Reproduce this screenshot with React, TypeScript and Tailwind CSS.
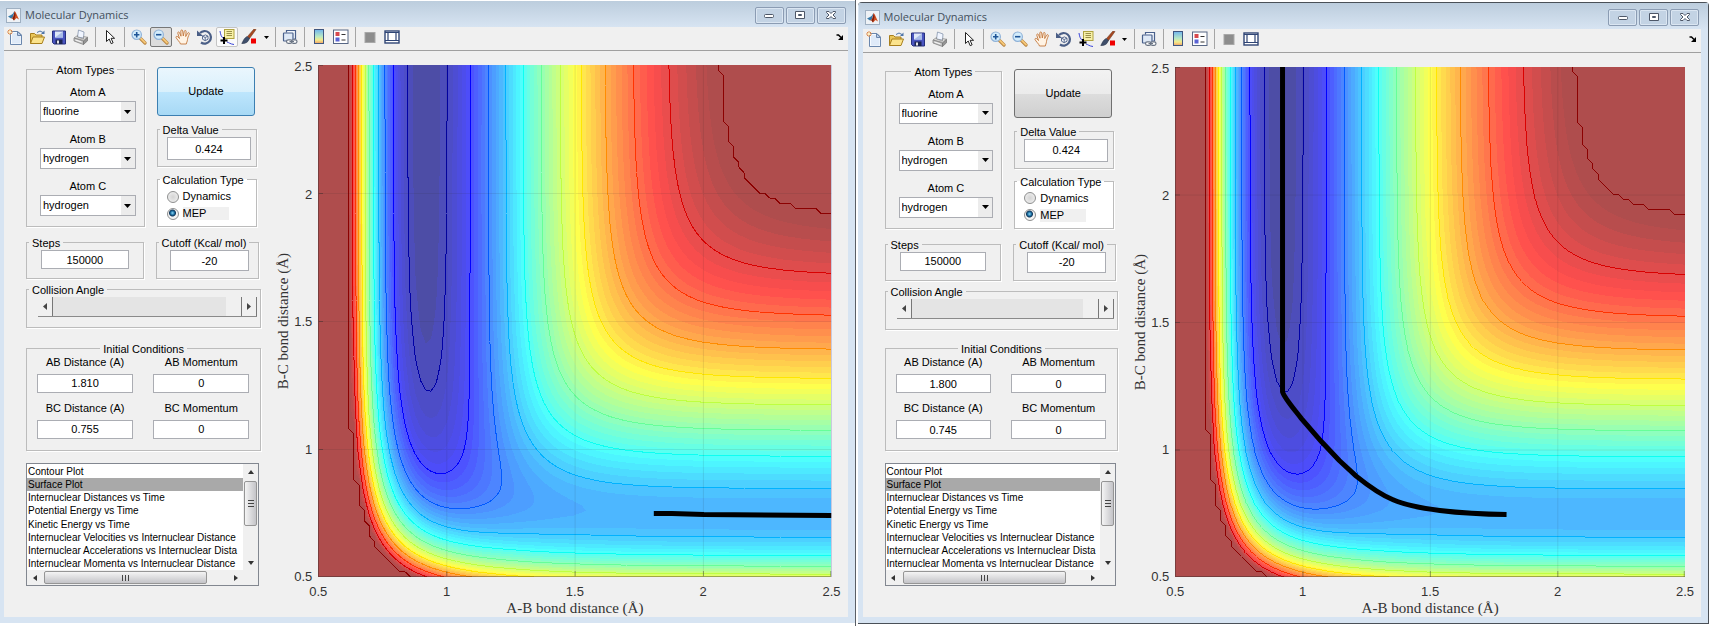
import { useId, type ReactNode } from "react";

/* ---------- LEPS potential energy surface for collinear F + H2 ---------- */

const SIZE = 512;
const CELLS = 100;
const STEP = SIZE / CELLS;
const R_MIN = 0.5;
const R_SPAN = 2;
const V_MIN = -141.5;
const V_CUT = -22.2;
const LINE_STEP = 10.44;
const BANDS_PER_LINE = 5;
const SATO = 0.188;

type Bond = { d: number; beta: number; re: number };
const HF: Bond = { d: 141.2, beta: 2.2187, re: 0.919 };
const HH: Bond = { d: 109.5, beta: 1.942, re: 0.742 };

function terms(bond: Bond, r: number): [number, number] {
  const e = Math.exp(-bond.beta * (r - bond.re));
  const singlet = bond.d * (e * e - 2 * e);
  const triplet = (bond.d / 2) * ((1 - SATO) / (1 + SATO)) * (e * e + 2 * e);
  return [(singlet + triplet) / 2, (singlet - triplet) / 2];
}

function energy(ab: number, bc: number): number {
  const [q1, j1] = terms(HF, ab);
  const [q2, j2] = terms(HH, bc);
  const [q3, j3] = terms(HF, ab + bc);
  return q1 + q2 + q3 - Math.sqrt(0.5 * ((j1 - j2) ** 2 + (j2 - j3) ** 2 + (j3 - j1) ** 2));
}

// Row 0 is the top of the plot (largest B-C distance).
const field: number[][] = Array.from({ length: CELLS + 1 }, (_, row) =>
  Array.from({ length: CELLS + 1 }, (_, col) => {
    const ab = R_MIN + (R_SPAN * col) / CELLS;
    const bc = R_MIN + (R_SPAN * (CELLS - row)) / CELLS;
    return Math.min(V_CUT, energy(ab, bc));
  }),
);

const clamp = (v: number) => Math.max(0, Math.min(1, v));

function jet(level: number, alpha: number): string {
  const t = clamp((level - V_MIN) / (V_CUT - V_MIN));
  const rgb = [3, 2, 1].map((c) => clamp(1.5 - Math.abs(4 * t - c)));
  if (t > 0.9) rgb[0] = Math.max(0.55, rgb[0]);
  return `rgb(${rgb.map((c) => Math.round(255 * (c * alpha + 1 - alpha))).join(",")})`;
}

type Point = [number, number];
const fmt = (p: Point) => `${p[0].toFixed(1)} ${p[1].toFixed(1)}`;

function cellPolygon(row: number, col: number, level: number) {
  const corners: [number, number, number][] = [
    [col, row, field[row][col]],
    [col + 1, row, field[row][col + 1]],
    [col + 1, row + 1, field[row + 1][col + 1]],
    [col, row + 1, field[row + 1][col]],
  ];
  const polygon: Point[] = [];
  const crossings: Point[] = [];
  let inside = 0;
  corners.forEach(([x, y, v], i) => {
    const [nx, ny, nv] = corners[(i + 1) % 4];
    if (v >= level) {
      inside += 1;
      polygon.push([x * STEP, y * STEP]);
    }
    if (v >= level !== nv >= level) {
      const t = (level - v) / (nv - v);
      const p: Point = [(x + (nx - x) * t) * STEP, (y + (ny - y) * t) * STEP];
      polygon.push(p);
      crossings.push(p);
    }
  });
  return { polygon, crossings, inside };
}

function fillPath(level: number): string {
  const parts: string[] = [];
  for (let row = 0; row < CELLS; row++) {
    let start = -1;
    for (let col = 0; col <= CELLS; col++) {
      const cell = col < CELLS ? cellPolygon(row, col, level) : null;
      if (cell && cell.inside === 4) {
        if (start < 0) start = col;
        continue;
      }
      if (start >= 0) {
        parts.push(`M${fmt([start * STEP, row * STEP])}H${(col * STEP).toFixed(1)}V${((row + 1) * STEP).toFixed(1)}H${(start * STEP).toFixed(1)}Z`);
        start = -1;
      }
      if (cell && cell.inside > 0) parts.push(`M${cell.polygon.map(fmt).join("L")}Z`);
    }
  }
  return parts.join("");
}

function linePath(level: number): string {
  const parts: string[] = [];
  for (let row = 0; row < CELLS; row++) {
    for (let col = 0; col < CELLS; col++) {
      const { crossings } = cellPolygon(row, col, level);
      for (let i = 0; i + 1 < crossings.length; i += 2) {
        parts.push(`M${fmt(crossings[i])}L${fmt(crossings[i + 1])}`);
      }
    }
  }
  return parts.join("");
}

const bandStep = LINE_STEP / BANDS_PER_LINE;
const bands = Array.from({ length: 57 }, (_, i) => {
  const level = V_CUT - bandStep * (56 - i);
  return { d: fillPath(level), color: jet(level + bandStep / 2, 0.7) };
});
const lines = Array.from({ length: 12 }, (_, i) => {
  const level = V_CUT - LINE_STEP * i;
  return { d: linePath(level), color: jet(level, 1) };
});

const TICKS = ["0.5", "1", "1.5", "2", "2.5"];

function ContourPlot({ path }: { path: string }) {
  return (
    <svg
      viewBox="0 0 512 512"
      preserveAspectRatio="none"
      className="block min-h-0 min-w-0 flex-1"
      role="img"
      aria-label="Potential energy contour plot"
    >
      <rect width="512" height="512" fill={jet(V_MIN, 0.7)} />
      <g shapeRendering="crispEdges">
        {bands.map((b, i) => (
          <path key={i} d={b.d} fill={b.color} />
        ))}
        {lines.map((l, i) => (
          <path key={i} d={l.d} fill="none" stroke={l.color} strokeWidth="1" />
        ))}
      </g>
      <path d="M128.500 0V512M256.500 0V512M384.500 0V512M0 128.500H512M0 256.500H512M0 384.500H512" stroke="#262626" strokeOpacity="0.1" fill="none" />
      <path
        d="M0.500 0V511.500H512M128.500 512V506M256.500 512V506M384.500 512V506M511.500 512V506M0 .5H5M0 128.500H5M0 256.500H5M0 384.500H5"
        stroke="#262626"
        strokeOpacity="0.4"
        fill="none"
      />
      <path d={path} stroke="#000" strokeWidth="5" fill="none" strokeLinejoin="round" />
    </svg>
  );
}

function PlotArea({ path }: { path: string }) {
  return (
    <div className="flex min-w-0 flex-1 pt-[14px] pr-[16px] text-[13px] text-[#333]">
      <div className="mb-[40px] flex w-[14px] items-center justify-center font-['Liberation_Serif',serif] text-[15px] leading-[16px]">
        <span className="rotate-180 whitespace-nowrap [writing-mode:vertical-rl]">B-C bond distance (Å)</span>
      </div>
      <div className="mb-[40px] flex w-[28px] flex-col-reverse justify-between pr-[6px] pt-[2px]">
        {TICKS.map((t) => (
          <span key={t} className="flex h-0 items-center justify-end">
            {t}
          </span>
        ))}
      </div>
      <div className="flex min-w-0 flex-1 flex-col">
        <ContourPlot path={path} />
        <div className="flex h-[24px] items-center justify-between pt-[5px]">
          {TICKS.map((t) => (
            <span key={t} className="flex w-0 justify-center">
              {t}
            </span>
          ))}
        </div>
        <div className="h-[16px] text-center font-['Liberation_Serif',serif] text-[15px] leading-[14px]">A-B bond distance (Å)</div>
      </div>
    </div>
  );
}

/* ------------------------------- Toolbar ------------------------------- */

function Icon({ children }: { children: ReactNode }) {
  return (
    <svg viewBox="0 0 16 16" className="h-4 w-4 shrink-0" aria-hidden="true">
      {children}
    </svg>
  );
}

const NewIcon = () => (
  <Icon>
    <path d="M3.500 2.500h7.500l3.500 3.500v9.500h-11z" fill="#f7fbff" stroke="#6b87ad" />
    <path d="M5 4h5v3h3.500v7.500H5z" fill="#dfeaf8" />
    <path d="M10.500 2.500V6.500h4z" fill="#b9cde8" stroke="#6b87ad" />
    <path d="M3 0v6M0 3h6M1 1l4 4M5 1l-4 4" stroke="#e08a4a" />
    <circle cx="3" cy="3" r="1.200" fill="#fff2c0" />
  </Icon>
);
const OpenIcon = () => (
  <Icon>
    <path d="M1.500 14.500v-10h4l1.500 1.500h6v3" fill="#e9c65a" stroke="#a87f1c" />
    <path d="M1.500 14.500l2.500-6.500h11.500l-2.500 6.500z" fill="#fbe38c" stroke="#a87f1c" />
    <path d="M8 3.500q3-3 6 0" fill="none" stroke="#4f75a8" />
    <path d="M15.500 1.500v3.500h-3.500z" fill="#4f75a8" />
  </Icon>
);
const SaveIcon = () => (
  <Icon>
    <path d="M1.500 2h13v13H3l-1.500-1.500z" fill="#4a55c0" stroke="#26307e" />
    <rect x="4" y="2.500" width="8" height="6" fill="#dfe8f8" />
    <path d="M4 8.500L12 2.500v6z" fill="#a9bce8" />
    <rect x="4.500" y="10.500" width="7" height="4.500" fill="#1c2552" />
    <rect x="6" y="11.500" width="2" height="3" fill="#e8e8e8" />
  </Icon>
);
const PrintIcon = () => (
  <Icon>
    <path d="M4.500 8L5.500 1l5.500 2-.5 6z" fill="#f0f5ff" stroke="#8594ac" strokeWidth=".8" />
    <path d="M1 9l3.500-2.500v1.500l6 2V7.500l4 .8-3.500 3.200z" fill="#dcdcdc" stroke="#888" strokeWidth=".7" />
    <path d="M1 9l9.500 3v3.500L1 12z" fill="#c2c2c2" stroke="#808080" strokeWidth=".8" />
    <path d="M10.500 12l4-3.700v3.500l-4 3.700z" fill="#949494" stroke="#777" strokeWidth=".8" />
    <path d="M2.500 11l6 2" stroke="#fafafa" />
  </Icon>
);
const ArrowIcon = () => (
  <Icon>
    <path d="M4.500 1.500v11l2.700-2.500 2 4.700 1.900-.9-2-4.500h3.500z" fill="#fff" stroke="#222" />
  </Icon>
);
const ZoomIcon = ({ plus }: { plus?: boolean }) => (
  <Icon>
    <path d="M9.500 9.500l4.500 4.500" stroke="#b88442" strokeWidth="3.200" strokeLinecap="round" />
    <path d="M9.500 9.200l4.500 4.500" stroke="#f6c877" strokeWidth="1.900" strokeLinecap="round" />
    <circle cx="5.700" cy="5.700" r="4.700" fill="#d3ecfb" stroke="#8fb2d8" strokeWidth="1.200" />
    <path d={plus ? "M3 5.700h5.400M5.700 3v5.400" : "M3 5.700h5.400"} stroke="#1f5597" strokeWidth="1.600" />
  </Icon>
);
const HandIcon = () => (
  <Icon>
    <path
      d="M5.500 15c-.5-2-4-5-4.500-6.500-.3-1.200 1.200-1.500 2-.6L4.500 9.500 2.800 4.300c-.4-1.400 1.200-1.900 1.700-.6L6 7.200 5.800 2c0-1.400 1.800-1.400 1.900 0L8.300 7l1-4.700c.3-1.300 2-1 1.800.4L10.700 7.500l1.900-3.300c.7-1.200 2.200-.4 1.700.8-1 2.500-1.600 3.500-1.800 5.500-.1 2-1 3-1.200 4.500z"
      fill="#fff3e4"
      stroke="#c2763a"
      strokeWidth=".9"
    />
  </Icon>
);
const RotateIcon = () => (
  <Icon>
    <path d="M3 4A6.300 6.300 0 1 1 4 13.500" fill="none" stroke="#4a5e86" strokeWidth="2.200" />
    <path d="M0 1.500v5.500h6z" fill="#4a5e86" />
    <path d="M5.500 7.200l3-1.300 2.500 1.300v3L8.200 11.700 5.500 10.200zM5.500 7.200l2.700 1.300L11 7.200M8.200 8.500v3" fill="#f4f6fa" stroke="#4a5e86" strokeWidth=".9" />
  </Icon>
);
const CursorIcon = () => (
  <Icon>
    <path d="M1 2C1.500 5 2 8 5 10M8 13c2 .5 3 2 7 2.500" fill="none" stroke="#3a45d8" />
    <rect x="5.500" y=".5" width="9.500" height="9" fill="#f7f0a8" stroke="#b0a440" />
    <path d="M7.500 2.500h5.500M7.500 4.500h5.500M7.500 6.500h5.500" stroke="#9a9048" />
    <path d="M5 8v7M1.500 11.500h7" stroke="#000" strokeWidth="2" />
  </Icon>
);
const BrushIcon = () => (
  <Icon>
    <path d="M15 0.500L13 0 6.500 7.500l2 2z" fill="#a9471f" stroke="#6e3a22" strokeWidth=".6" />
    <path d="M6 7.500l2.500 2-1.700 3c-1.300 1.500-4 2.200-6 2C2 12.500 3 9 6 7.500z" fill="#3f4f6b" stroke="#29344a" strokeWidth=".6" />
    <rect x="10" y="9.500" width="5" height="5" fill="#f00000" />
  </Icon>
);
const LinkIcon = () => (
  <Icon>
    <path d="M4.500 3.500V1.500h9v8.500h-2" fill="#f4f8fd" stroke="#4a618c" strokeWidth="1.200" />
    <rect x="1.500" y="4" width="9.500" height="8" rx=".5" fill="#dfe9f6" stroke="#4a618c" strokeWidth="1.200" />
    <rect x="4.500" y="10.800" width="5.500" height="3.600" rx="1.800" fill="#fff" stroke="#6a7484" strokeWidth="1.200" />
    <rect x="9.500" y="10.800" width="5.500" height="3.600" rx="1.800" fill="#fff" stroke="#6a7484" strokeWidth="1.200" />
    <path d="M7.500 12.600h4.500" stroke="#6a7484" strokeWidth="1.200" />
  </Icon>
);
const ColorbarIcon = () => {
  const id = useId();
  return (
    <Icon>
      <linearGradient id={id} x1="0" y1="0" x2="0" y2="1">
        <stop offset="0" stopColor="#6fb4ee" />
        <stop offset=".5" stopColor="#b8e8c4" />
        <stop offset=".75" stopColor="#f4eb8a" />
        <stop offset="1" stopColor="#f0a06a" />
      </linearGradient>
      <rect x="3.500" y=".5" width="9" height="14" fill={`url(#${id})`} stroke="#3f5680" />
    </Icon>
  );
};
const LegendIcon = () => (
  <Icon>
    <rect x=".5" y="1" width="14.500" height="13.500" fill="#fff" stroke="#566684" />
    <rect x="2.500" y="3" width="4" height="4" fill="#d8484c" />
    <rect x="2.500" y="8.500" width="4" height="4" fill="#5a63d4" />
    <path d="M8.500 5.500h4M8.500 11h4" stroke="#333" />
  </Icon>
);
const HideIcon = () => (
  <Icon>
    <rect x="3" y="3.500" width="10" height="10" fill="#8d8d8d" stroke="#a8a8a8" />
  </Icon>
);
const DockIcon = () => (
  <Icon>
    <rect x="1" y="2" width="14" height="12" fill="#fff" stroke="#2f4575" strokeWidth="1.400" />
    <path d="M1 3.500h14M4 4v7M12 4v7M1 11.500h14" stroke="#2f4575" strokeWidth="1.200" fill="none" />
  </Icon>
);

function Tool({ label, state, children }: { label: string; state?: "pressed" | "hover"; children: ReactNode }) {
  const look =
    state === "pressed"
      ? "border-[#777] bg-[#dcdcdc]"
      : state === "hover"
        ? "border-[#c4c4c4] bg-[#fafafa]"
        : "border-transparent";
  return (
    <button type="button" aria-label={label} className={`flex h-5 w-[22px] items-center justify-center rounded-xs border ${look}`}>
      {children}
    </button>
  );
}

const Divider = () => (
  <span className="flex w-[7px] justify-center">
    <span className="h-5 w-px bg-[#a5a5a5]" />
  </span>
);

function Toolbar({ active }: { active: boolean }) {
  return (
    <div className="flex h-6 items-center border-b border-[#a0a0a0] bg-[#f0f0f0] pb-[3px]">
      <Tool label="New Figure"><NewIcon /></Tool>
      <Tool label="Open File"><OpenIcon /></Tool>
      <Tool label="Save Figure"><SaveIcon /></Tool>
      <Tool label="Print Figure"><PrintIcon /></Tool>
      <Divider />
      <Tool label="Edit Plot"><ArrowIcon /></Tool>
      <Divider />
      <Tool label="Zoom In"><ZoomIcon plus /></Tool>
      <Tool label="Zoom Out" state={active ? "pressed" : undefined}><ZoomIcon /></Tool>
      <Tool label="Pan"><HandIcon /></Tool>
      <Tool label="Rotate 3D"><RotateIcon /></Tool>
      <Tool label="Data Cursor" state={active ? "hover" : undefined}><CursorIcon /></Tool>
      <Tool label="Brush"><BrushIcon /></Tool>
      <button type="button" aria-label="Brush colours" className="flex h-5 w-3 items-center justify-center">
        <svg viewBox="0 0 5 3" className="h-[3px] w-[5px]"><path d="M0 0h5L2.500 3z" /></svg>
      </button>
      <Divider />
      <Tool label="Link Plot"><LinkIcon /></Tool>
      <Divider />
      <Tool label="Insert Colorbar"><ColorbarIcon /></Tool>
      <Tool label="Insert Legend"><LegendIcon /></Tool>
      <Divider />
      <Tool label="Hide Plot Tools"><HideIcon /></Tool>
      <Tool label="Show Plot Tools"><DockIcon /></Tool>
      <button type="button" aria-label="Dock" className="mr-1 ml-auto flex h-5 w-2 items-center">
        <svg viewBox="0 0 7 6" className="h-[6px] w-[7px]">
          <path d="M.5 1h2L5 3.500" stroke="#000" strokeWidth="1.500" fill="none" />
          <path d="M7 1v5H2z" />
        </svg>
      </button>
    </div>
  );
}

/* ------------------------------- Controls ------------------------------- */

type GroupProps = { title: string; center?: boolean; white?: boolean; className?: string; inner?: string; children: ReactNode };

function Group({ title, center, white, className, inner, children }: GroupProps) {
  return (
    <fieldset className={`min-w-0 border border-[#bcbcbc] shadow-[1px_1px_0_#fff] ${white ? "bg-white" : ""} ${className ?? ""}`}>
      <legend className={`px-[3px] pt-[2px] leading-[13px] whitespace-nowrap ${center ? "mx-auto" : "ml-[2px]"}`}>{title}</legend>
      <div className={inner}>{children}</div>
    </fieldset>
  );
}

function TextBox({ label, value, className }: { label: string; value: string; className?: string }) {
  return (
    <input
      type="text"
      aria-label={label}
      defaultValue={value}
      className={`block w-full min-w-0 border border-[#abadb3] bg-white text-center outline-none ${className ?? ""}`}
    />
  );
}

function LabelledBox({ label, value }: { label: string; value: string }) {
  const id = useId();
  return (
    <div className="min-w-0 flex-1">
      <label htmlFor={id} className="block text-center leading-[14px] whitespace-nowrap">{label}</label>
      <input id={id} type="text" defaultValue={value} className="mt-[5px] block h-[19px] w-full min-w-0 border border-[#abadb3] bg-white text-center outline-none" />
    </div>
  );
}

function AtomSelect({ label, value }: { label: string; value: string }) {
  const id = useId();
  return (
    <div>
      <label htmlFor={id} className="block text-center leading-[14px]">{label}</label>
      <div className="relative mt-[2px]">
        <select id={id} defaultValue={value} className="block h-[21px] w-full appearance-none border border-[#abadb3] bg-white pl-[2px] outline-none">
          <option>fluorine</option>
          <option>hydrogen</option>
        </select>
        <span className="pointer-events-none absolute top-px right-px bottom-px flex w-[14px] items-center justify-center bg-[#ececec]">
          <svg viewBox="0 0 7 4" className="h-1 w-[7px]"><path d="M0 0h7L3.500 4z" /></svg>
        </span>
      </div>
    </div>
  );
}

function Radio({ name, label, checked }: { name: string; label: string; checked?: boolean }) {
  return (
    <label className="flex h-[17px] items-center gap-[4px]">
      <input
        type="radio"
        name={name}
        defaultChecked={checked}
        className="h-3 w-3 appearance-none rounded-full border border-[#8e8f8f] bg-[radial-gradient(circle,#d4d4d4,#f4f4f4)] checked:bg-[radial-gradient(circle_at_45%_40%,#8fd8f8_0,#1b6ea0_2px,#10365a_3px,#f4f4f4_4px)]"
      />
      <span className={`h-[13px] w-[46px] leading-[13px] ${checked ? "bg-[#f0f0f0]" : ""}`}>{label}</span>
    </label>
  );
}

function StepButton({ label, flip }: { label: string; flip?: boolean }) {
  return (
    <button type="button" aria-label={label} className="flex h-[19px] w-[15px] items-center justify-center border-r border-[#777] bg-[#f0f0f0]">
      <svg viewBox="0 0 4 7" className={`h-[7px] w-1 ${flip ? "rotate-180" : ""}`}><path d="M4 0v7L0 3.500z" fill="#444" /></svg>
    </button>
  );
}

function CollisionAngle() {
  return (
    <Group title="Collision Angle" className="h-[46px]" inner="pr-[3px] pl-[11px]">
      <div className="flex border-b border-[#8a8a8a]">
        <StepButton label="Decrease angle" />
        <input
          type="range"
          aria-label="Collision Angle"
          defaultValue={180}
          max={180}
          className="h-[19px] min-w-0 flex-1 appearance-none bg-[#e4e4e4] [&::-webkit-slider-thumb]:h-[19px] [&::-webkit-slider-thumb]:w-4 [&::-webkit-slider-thumb]:appearance-none [&::-webkit-slider-thumb]:border-r [&::-webkit-slider-thumb]:border-[#777] [&::-webkit-slider-thumb]:bg-[#f0f0f0]"
        />
        <StepButton label="Increase angle" flip />
      </div>
    </Group>
  );
}

const PLOTS = [
  "Contour Plot",
  "Surface Plot",
  "Internuclear Distances vs Time",
  "Potential Energy vs Time",
  "Kinetic Energy vs Time",
  "Internuclear Velocities vs Internuclear Distance",
  "Internuclear Accelerations vs Internuclear Dista",
  "Internuclear Momenta vs Internuclear Distance",
];

function Arrow({ className, label }: { className: string; label: string }) {
  return (
    <button type="button" aria-label={label} className="flex h-[15px] w-[15px] shrink-0 items-center justify-center">
      <svg viewBox="0 0 6 4" className={`h-1 w-[6px] ${className}`}><path d="M0 4h6L3 0z" fill="#333" /></svg>
    </button>
  );
}

function PlotList() {
  return (
    <div className="flex h-[123px] flex-col border border-[#828790] bg-[#f0f0f0]">
      <div className="flex h-[106px] min-w-0">
        <ul role="listbox" aria-label="Plot type" className="flex min-w-0 flex-1 flex-col overflow-hidden bg-white pt-px text-[10px]">
          {PLOTS.map((p) => (
            <li
              key={p}
              role="option"
              aria-selected={p === "Surface Plot"}
              className={`flex flex-1 items-center overflow-hidden pl-px leading-[13px] whitespace-nowrap ${p === "Surface Plot" ? "bg-[#a9a9a9]" : ""}`}
            >
              {p}
            </li>
          ))}
        </ul>
        <div className="flex w-[15px] flex-col items-center">
          <Arrow className="" label="Scroll up" />
          <div className="mt-[2px] flex h-[45px] w-[13px] flex-col items-center justify-center gap-[2px] rounded-xs border border-[#959595] bg-linear-to-r from-[#f4f4f4] to-[#c4c4c8]">
            <span className="h-px w-[6px] bg-[#444]" />
            <span className="h-px w-[6px] bg-[#444]" />
            <span className="h-px w-[6px] bg-[#444]" />
          </div>
          <span className="flex-1" />
          <Arrow className="rotate-180" label="Scroll down" />
        </div>
      </div>
      <div className="flex flex-1 items-center pr-[15px]">
        <Arrow className="-rotate-90" label="Scroll left" />
        <div className="ml-[2px] flex h-[13px] w-[163px] items-center justify-center gap-[2px] rounded-xs border border-[#959595] bg-linear-to-b from-[#f4f4f4] to-[#c4c4c8]">
          <span className="h-[6px] w-px bg-[#444]" />
          <span className="h-[6px] w-px bg-[#444]" />
          <span className="h-[6px] w-px bg-[#444]" />
        </div>
        <span className="flex-1" />
        <Arrow className="rotate-90" label="Scroll right" />
      </div>
    </div>
  );
}

type WindowData = { active: boolean; ab: string; bc: string; path: string };

function ControlPanel({ data }: { data: WindowData }) {
  const name = useId();
  return (
    <div className="flex w-[30.5%] shrink-0 flex-col pl-[22px] text-[11px] text-black">
      <div className="flex-[11]" />
      <div className="flex gap-3 pr-1">
        <Group title="Atom Types" center className="min-w-0 flex-[117]" inner="flex flex-col gap-[10px] pt-[8px] pr-[8px] pb-[10px] pl-[13px]">
          <AtomSelect label="Atom A" value="fluorine" />
          <AtomSelect label="Atom B" value="hydrogen" />
          <AtomSelect label="Atom C" value="hydrogen" />
        </Group>
        <div className="flex min-w-0 flex-[101] flex-col">
          <button
            type="button"
            className={`mt-[5px] mr-[2px] h-[49px] rounded-[3px] border ${
              data.active
                ? "border-[#3c7fb1] bg-[linear-gradient(#eaf6fd_0%,#d9f0fc_50%,#bee6fd_50%,#a7d9f5_100%)]"
                : "border-[#707070] bg-[linear-gradient(#f2f2f2_0%,#ebebeb_50%,#dddddd_50%,#cfcfcf_100%)]"
            }`}
          >
            Update
          </button>
          <Group title="Delta Value" className="mt-[6px] h-[45px]" inner="pr-[5px] pl-[9px]">
            <TextBox label="Delta Value" value="0.424" className="h-[23px]" />
          </Group>
          <Group title="Calculation Type" white className="mt-[5px] h-[55px]" inner="pt-px pl-[9px]">
            <Radio name={name} label="Dynamics" />
            <Radio name={name} label="MEP" checked />
          </Group>
        </div>
      </div>
      <div className="flex-[8]" />
      <div className="flex gap-3 pr-[2px]">
        <Group title="Steps" className="h-[44px] flex-[117]" inner="pr-[14px] pl-[14px]">
          <TextBox label="Steps" value="150000" className="h-[19px]" />
        </Group>
        <Group title="Cutoff (Kcal/ mol)" className="h-[44px] flex-[103]" inner="pr-[9px] pl-[13px]">
          <TextBox label="Cutoff" value="-20" className="h-[21px]" />
        </Group>
      </div>
      <div className="flex-[3]" />
      <CollisionAngle />
      <div className="flex-[12]" />
      <Group title="Initial Conditions" center className="h-[110px]" inner="-mt-px pr-[11px] pl-[10px]">
        <div className="flex gap-5">
          <LabelledBox label="AB Distance (A)" value={data.ab} />
          <LabelledBox label="AB Momentum" value="0" />
        </div>
        <div className="mt-[8px] flex gap-5">
          <LabelledBox label="BC Distance (A)" value={data.bc} />
          <LabelledBox label="BC Momentum" value="0" />
        </div>
      </Group>
      <div className="flex-[12]" />
      <div className="pr-[2px]">
        <PlotList />
      </div>
      <div className="h-[31px]" />
    </div>
  );
}

/* -------------------------------- Window -------------------------------- */

function CaptionButton({ label, children }: { label: string; children: ReactNode }) {
  return (
    <button type="button" aria-label={label} className="flex h-[17px] w-[29px] items-center justify-center rounded-xs border border-[#8b9cb3] bg-[#c3d3e4] shadow-[inset_0_0_0_1px_#dbe6f2]">
      <svg viewBox="0 0 12 10" className="h-[10px] w-3" fill="#fff" stroke="#4d5768">
        {children}
      </svg>
    </button>
  );
}

function FigureWindow({ data }: { data: WindowData }) {
  return (
    <section className="flex min-w-0 flex-1 flex-col bg-[#d7e4f2]">
      <header className="flex h-[26px] shrink-0 items-center bg-linear-to-b from-[#bccddd] to-[#d7e4f2] pt-[2px] pr-[9px] pl-[6px]">
        <span className="flex h-[15px] w-[15px] items-center justify-center border border-[#9fb0c2] bg-[#eef2f6]">
          <svg viewBox="0 0 13 13" className="h-[13px] w-[13px]" aria-hidden="true">
            <path d="M1 7.500L4 6l1.800-1.200L7.500 2 6 8.500 4 9.500z" fill="#3579a8" />
            <path d="M4 9.500L6 8l1.800-6 1.200 2 3 6.500-2.500-1.500L7 11.500 5.500 9.500z" fill="#d4501e" />
            <path d="M7.800 2l.7 4L7 11.500 5.500 9.500 6.700 7z" fill="#7c1e10" />
          </svg>
        </span>
        <h1 className="ml-[4px] font-['Open_Sans',sans-serif] text-[11px] leading-4 text-[#44505c]">Molecular Dynamics</h1>
        <div className="ml-auto flex gap-[2px]">
          <CaptionButton label="Minimize"><rect x="1.500" y="4.500" width="9" height="3" rx="1" /></CaptionButton>
          <CaptionButton label="Maximize"><path d="M1.500 1.500h9v7h-9zM4.500 4.500v1h3v-1z" fillRule="evenodd" /></CaptionButton>
          <CaptionButton label="Close"><path d="M1.500 1.500h2.500l2 2 2-2h2.500v1L8 5l2.500 2.500v1H8l-2-2-2 2H1.500v-1L4 5 1.500 2.500z" /></CaptionButton>
        </div>
      </header>
      <div className="mr-[7px] mb-[6px] ml-1 flex min-h-0 flex-1 flex-col bg-[#f0f0f0]">
        <Toolbar active={data.active} />
        <div className="flex min-h-0 flex-1">
          <ControlPanel data={data} />
          <div className="w-[15px] shrink-0" />
          <PlotArea path={data.path} />
        </div>
      </div>
    </section>
  );
}

export default function App() {
  return (
    <main className="flex h-screen min-h-[620px] min-w-[1200px] bg-white font-['Liberation_Sans',Arial,sans-serif]">
      <div className="flex min-w-0 flex-[855] border-r border-[#5a5f66] pt-px pb-[3px]">
        <FigureWindow data={{ active: true, ab: "1.810", bc: "0.755", path: "M335 448.500H353L385 449.500 512 450.500" }} />
      </div>
      <div className="w-[2px]" />
      <div className="flex min-w-0 flex-[852] pb-[2px] pt-[2px]">
        <div className="flex min-w-0 flex-1 rounded-t-sm border-y border-r border-[#4a5057] bg-[#d7e4f2] pl-px">
          <FigureWindow
            data={{
              active: false,
              ab: "1.800",
              bc: "0.745",
              path: "M108 0V326C109 331 116 339 127 353L147 376 165 395 182 410.700C196 422 208 430 219 434.400C232 440 248 443 266 445.200C285 447.500 308 449 333 449.200",
            }}
          />
        </div>
      </div>
    </main>
  );
}
